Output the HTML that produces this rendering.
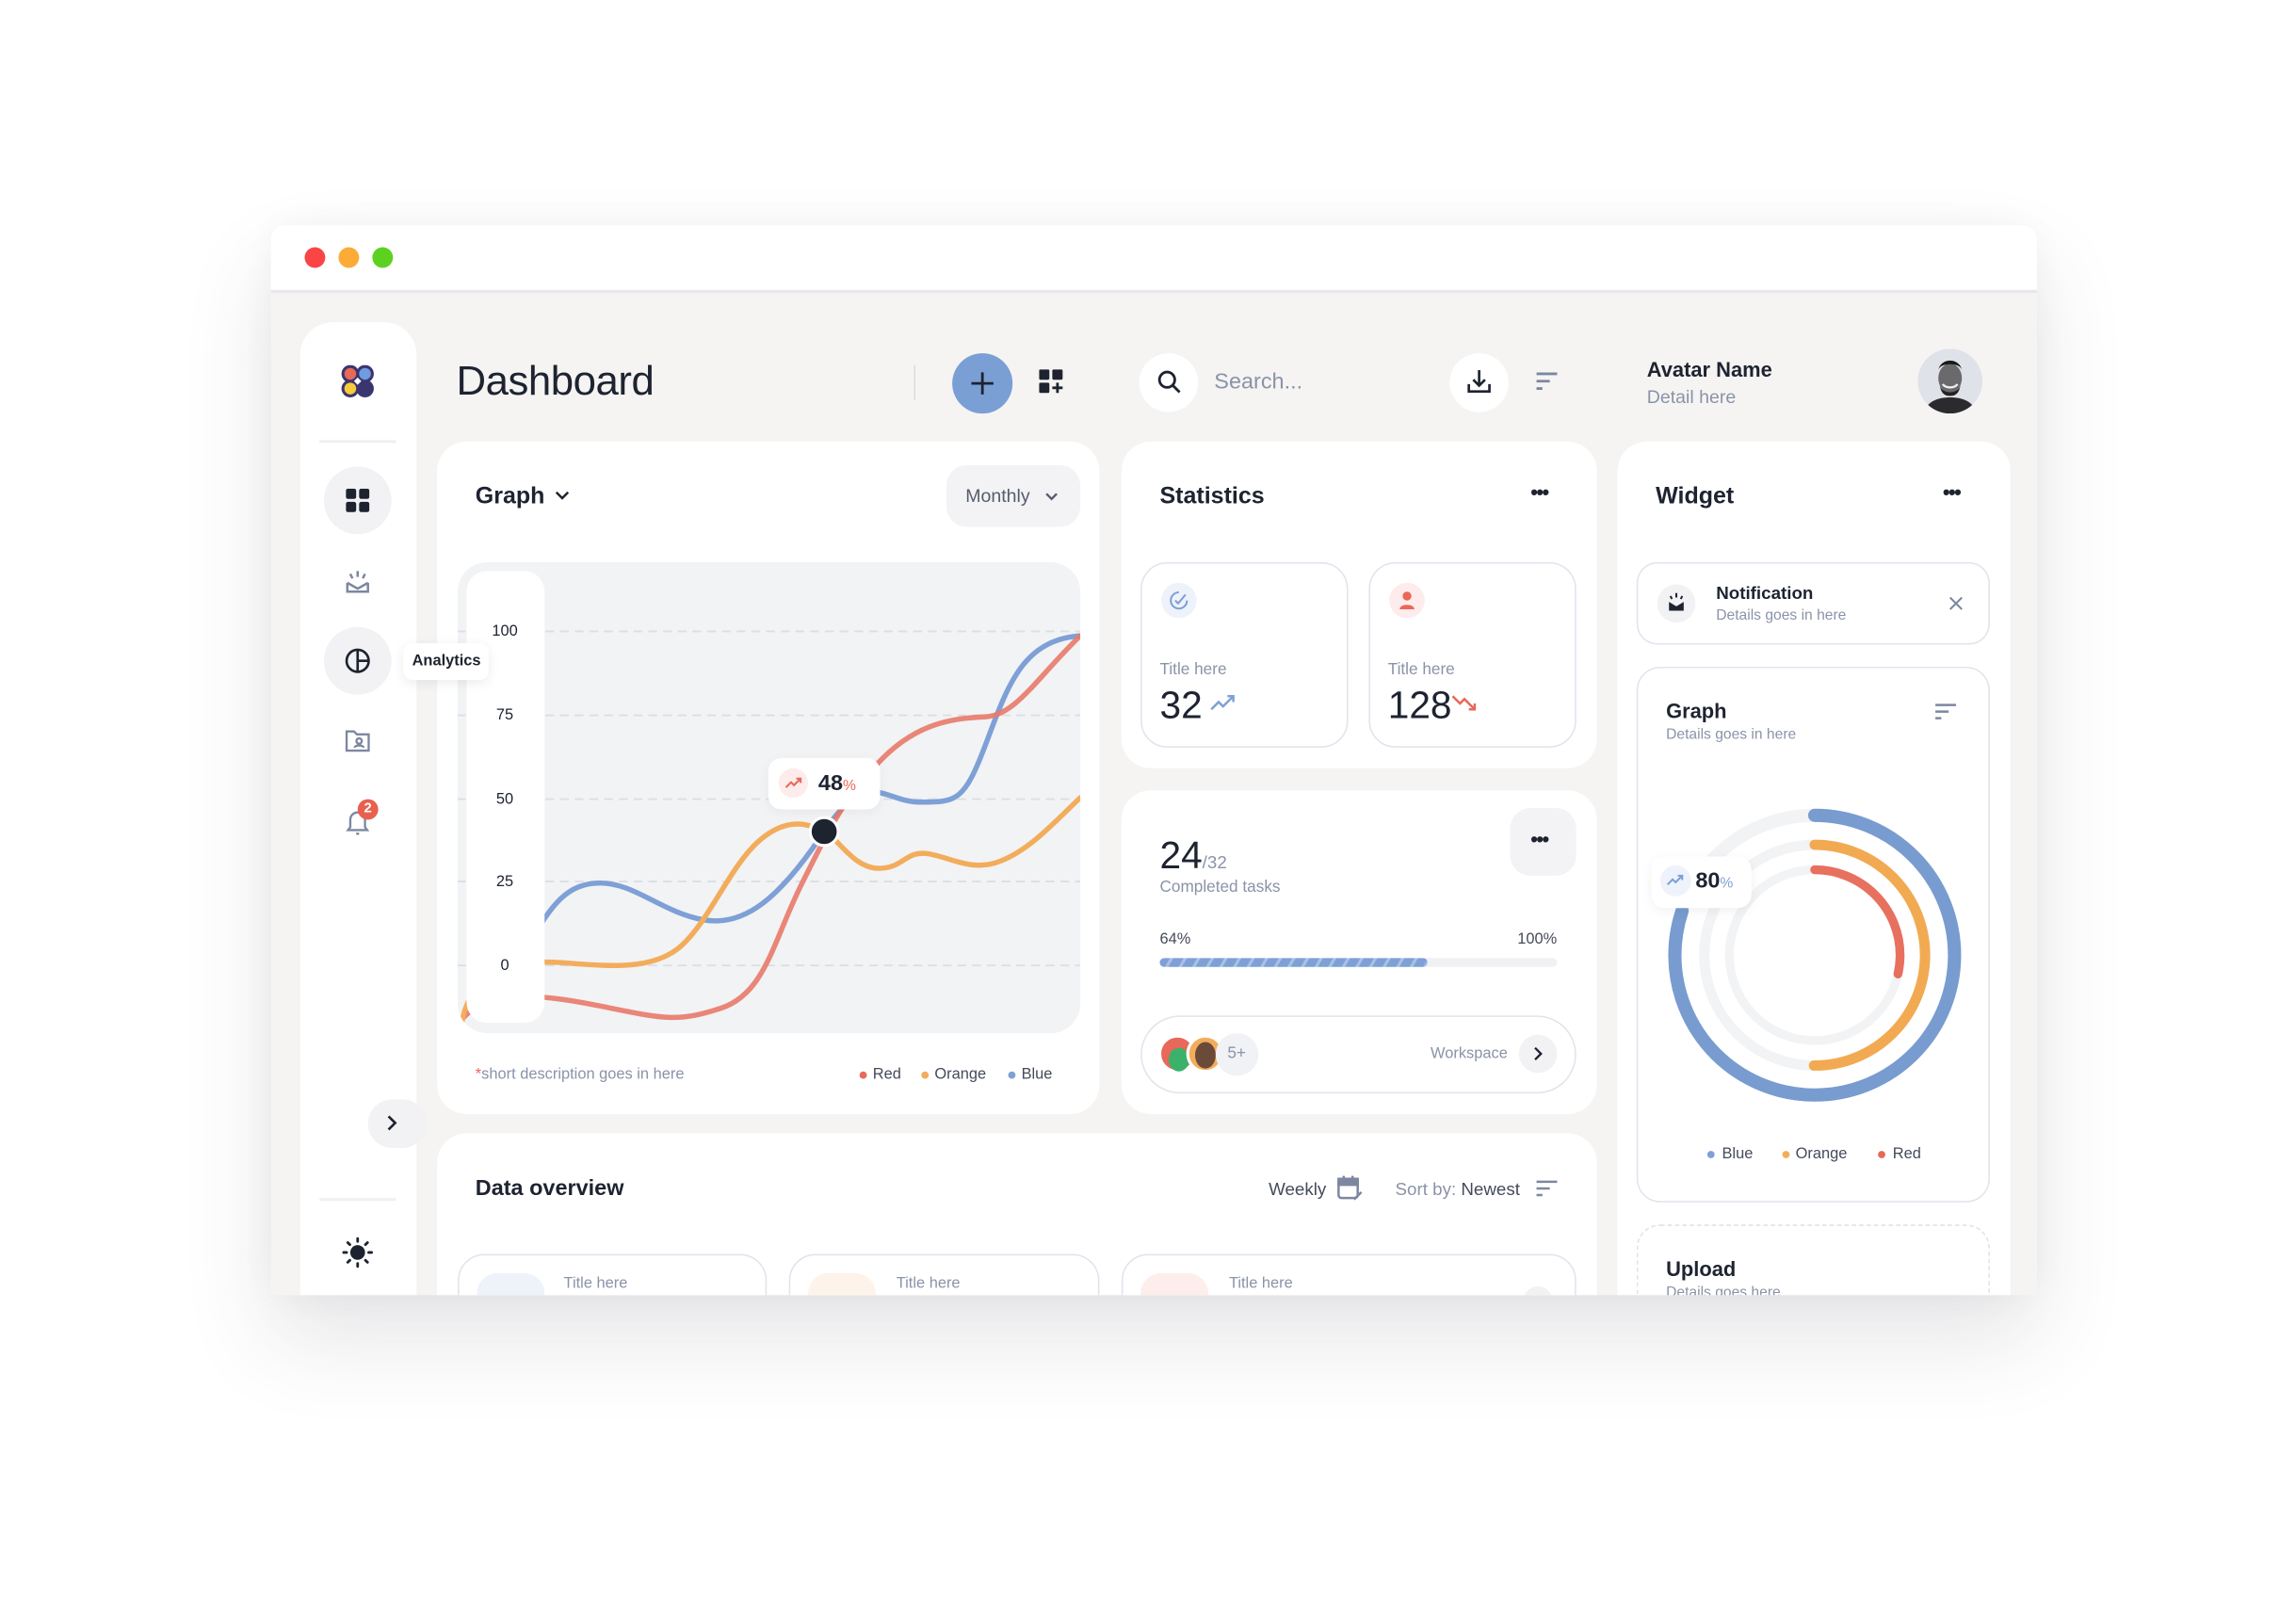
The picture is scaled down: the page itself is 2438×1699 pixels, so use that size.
<!DOCTYPE html>
<html><head><meta charset="utf-8"><style>
*{box-sizing:border-box;margin:0;padding:0}
html,body{width:2438px;height:1699px;overflow:hidden;background:#fff;font-family:"Liberation Sans",sans-serif}
#root{position:absolute;left:0;top:0;width:1560px;height:1087px;transform:scale(1.5628);transform-origin:0 0}
.a{position:absolute}
.win{position:absolute;left:184px;top:153px;width:1200px;height:727px;background:#f5f4f3;border-radius:10px 10px 0 0;overflow:hidden;box-shadow:0 30px 60px rgba(60,60,80,.13),0 0 30px rgba(60,60,80,.05)}
.card{position:absolute;background:#fff;border-radius:20px}
.t{position:absolute;white-space:nowrap;color:#1e2330}
.g{color:#8a93a8}
.b{font-weight:bold}
.sub{position:absolute;border:1px solid #e1e4ec;border-radius:18px;background:#fff}
.circ{position:absolute;border-radius:50%}
</style></head><body><div id="root">
<div class="win">
 <div class="a" style="left:0;top:0;width:1200px;height:46px;background:#fff;border-bottom:2px solid #e8e8ec"></div>
 <div class="circ" style="left:23px;top:15px;width:14px;height:14px;background:#f94545"></div>
 <div class="circ" style="left:46px;top:15px;width:14px;height:14px;background:#fbab36"></div>
 <div class="circ" style="left:69px;top:15px;width:14px;height:14px;background:#5dd120"></div>
</div>
<div style="position:absolute;left:184px;top:153px;width:1200px;height:727px;overflow:hidden">
<div style="position:absolute;left:-184px;top:-153px;width:1560px;height:1087px">
 <!-- sidebar -->
 <div class="card" style="left:204px;top:219px;width:79px;height:700px;border-radius:22px"></div>
 <svg class="a" style="left:232px;top:248px" width="22" height="22" viewBox="0 0 22 22"><circle cx="6" cy="6" r="6" fill="#3b356f"/><circle cx="16" cy="6" r="6" fill="#3b356f"/><circle cx="6" cy="16" r="6" fill="#3b356f"/><circle cx="16" cy="16" r="6" fill="#3b356f"/><circle cx="6" cy="6" r="4" fill="#e8685a"/><circle cx="16" cy="6" r="4" fill="#6f9be0"/><circle cx="6" cy="16" r="4" fill="#f5cc3c"/><path d="M11 8.5L13.5 11 11 13.5 8.5 11z" fill="#fff"/></svg>
 <div class="a" style="left:217px;top:299px;width:52px;height:2px;background:#f0f0f2"></div>
 <div class="circ" style="left:220px;top:317px;width:46px;height:46px;background:#f2f2f4"></div>
 <svg class="a" style="left:235px;top:332px" width="16" height="16"><rect x="0" y="0" width="7" height="7" rx="1.5" fill="#1e2330"/><rect x="9" y="0" width="7" height="7" rx="1.5" fill="#1e2330"/><rect x="0" y="9" width="7" height="7" rx="1.5" fill="#1e2330"/><rect x="9" y="9" width="7" height="7" rx="1.5" fill="#1e2330"/></svg>
 <svg class="a" style="left:234px;top:386px" width="18" height="18" fill="none" stroke="#7c87a0" stroke-width="1.6"><path d="M2 10v6h14v-6M2 10l7 4 7-4"/><path d="M9 2v4M4 4l1.5 3M14 4l-1.5 3"/></svg>
 <div class="circ" style="left:220px;top:426px;width:46px;height:46px;background:#f2f2f4"></div>
 <svg class="a" style="left:234px;top:440px" width="18" height="18" fill="none" stroke="#1e2330" stroke-width="1.7"><circle cx="9" cy="9" r="7.5"/><path d="M9 1.5v15M9 9h7.5"/></svg>
 <svg class="a" style="left:234px;top:494px" width="18" height="18" fill="none" stroke="#7c87a0" stroke-width="1.5"><path d="M1.5 3h5l2 2h8v11h-15z"/><circle cx="10" cy="9.5" r="1.8"/><path d="M7 14c0-2 6-2 6 0"/></svg>
 <svg class="a" style="left:234px;top:548px" width="18" height="20" fill="none" stroke="#7c87a0" stroke-width="1.5"><path d="M4 14V9a5 5 0 0110 0v5l1.5 2h-13z"/><path d="M8 18.5h2"/></svg>
 <div class="circ" style="left:243px;top:543px;width:14px;height:14px;background:#e9604e;color:#fff;font-size:9.5px;font-weight:bold;text-align:center;line-height:14px">2</div>
 <div class="a" style="left:250px;top:747px;width:40px;height:33px;background:#f2f2f4;border-radius:17px"></div>
 <svg class="a" style="left:261px;top:757px" width="10" height="12" fill="none" stroke="#1e2330" stroke-width="1.7"><path d="M3 1.5l4.5 4.5L3 10.5"/></svg>
 <div class="a" style="left:217px;top:814px;width:52px;height:2px;background:#f0f0f2"></div>
 <svg class="a" style="left:232px;top:840px" width="22" height="22" stroke="#1e2330" stroke-width="1.8" stroke-linecap="round"><circle cx="11" cy="11" r="5" fill="#1e2330" stroke="none"/><path d="M11 1.5v2M11 18.5v2M1.5 11h2M18.5 11h2M4.3 4.3l1.4 1.4M16.3 16.3l1.4 1.4M4.3 17.7l1.4-1.4M16.3 5.7l1.4-1.4"/></svg>

 <!-- header -->
 <div class="t" style="left:310px;top:243px;font-size:28px;letter-spacing:-.3px">Dashboard</div>
 <div class="a" style="left:621px;top:248px;width:1px;height:24px;background:#dcdce0"></div>
 <div class="circ" style="left:647px;top:240px;width:41px;height:41px;background:#7a9fd4"></div>
 <svg class="a" style="left:659px;top:252px" width="17" height="17" stroke="#1e2330" stroke-width="1.8"><path d="M8.5 1v15M1 8.5h15"/></svg>
 <svg class="a" style="left:706px;top:251px" width="17" height="17" fill="#1e2330"><rect x="0" y="0" width="7" height="7" rx="1"/><rect x="9" y="0" width="7" height="7" rx="1"/><rect x="0" y="9" width="7" height="7" rx="1"/><path d="M12.5 9v7M9 12.5h7" stroke="#1e2330" stroke-width="1.8"/></svg>
 <div class="circ" style="left:774px;top:240px;width:40px;height:40px;background:#fff"></div>
 <svg class="a" style="left:786px;top:251px" width="17" height="17" fill="none" stroke="#1e2330" stroke-width="1.8"><circle cx="7" cy="7" r="5.2"/><path d="M11 11l4.5 4.5"/></svg>
 <div class="t g" style="left:825px;top:251px;font-size:15px">Search...</div>
 <div class="circ" style="left:985px;top:240px;width:40px;height:40px;background:#fff"></div>
 <svg class="a" style="left:996px;top:250px" width="18" height="18" fill="none" stroke="#1e2330" stroke-width="1.7"><path d="M9 1.5v10M5 8l4 4 4-4M2 11v5h14v-5"/></svg>
 <svg class="a" style="left:1043px;top:252px" width="16" height="14" stroke="#7c87a0" stroke-width="1.8"><path d="M1 2h14M1 7h9M1 12h4"/></svg>
 <div class="t b" style="left:1119px;top:243px;font-size:14px">Avatar Name</div>
 <div class="t g" style="left:1119px;top:263px;font-size:12.5px">Detail here</div>
 <svg class="a" style="left:1303px;top:237px" width="44" height="44"><defs><clipPath id="av"><circle cx="22" cy="22" r="22"/></clipPath></defs><circle cx="22" cy="22" r="22" fill="#dfe2e8"/><g clip-path="url(#av)"><path d="M4 44c2-8 9-11 18-11s16 3 18 11z" fill="#2b2b2e"/><ellipse cx="22" cy="20" rx="8" ry="10" fill="#6a6a6c"/><path d="M14 15c0-6 16-6 16 0 0-3-3-7-8-7s-8 4-8 7z" fill="#1a1a1a"/><path d="M17 24c2 3 8 3 10 0" stroke="#eee" stroke-width="1.5" fill="none"/><path d="M15 25c2 6 12 6 14 0-1 5-3 7-7 7s-6-2-7-7z" fill="#222"/></g></svg>

 <!-- graph card -->
 <div class="card" style="left:297px;top:300px;width:450px;height:457px"></div>
 <div class="t b" style="left:323px;top:329px;font-size:16px">Graph</div>
 <svg class="a" style="left:377px;top:333px" width="10" height="8" fill="none" stroke="#1e2330" stroke-width="1.6"><path d="M1 1.5l4 4 4-4"/></svg>
 <div class="a" style="left:643px;top:316px;width:91px;height:42px;background:#f3f3f5;border-radius:14px"></div>
 <div class="t" style="left:656px;top:330px;font-size:12.5px;color:#555c6c">Monthly</div>
 <svg class="a" style="left:710px;top:334px" width="9" height="7" fill="none" stroke="#555c6c" stroke-width="1.5"><path d="M1 1.5l3.5 3.5 3.5-3.5"/></svg>
 <div class="a" style="left:311px;top:382px;width:423px;height:320px;background:#f2f3f5;border-radius:20px;overflow:hidden">
  <svg width="423" height="320" viewBox="311 382 423 320" style="position:absolute;left:0;top:0" fill="none" stroke-linecap="round">
   <g stroke="#dcdee4" stroke-width="1.2" stroke-dasharray="5 5"><path d="M311 429H734M311 486H734M311 543H734M311 599H734M311 656H734"/></g>
   <path d="M360 640C375 615 385 600 408 600S450 620 478 625S530 610 560 565S600 545 625 545S655 545 670 505S695 435 734 432" stroke="#7ea0d6" stroke-width="3.5"/>
   <path d="M312 695C330 670 370 676 410 684S460 695 490 685S525 640 545 600S575 540 600 515S650 488 670 487S705 460 734 432" stroke="#e87a6a" stroke-width="3.5" opacity=".9"/>
   <path d="M314 694C320 660 350 652 380 654S440 660 460 645S495 590 515 572S550 560 560 565S580 590 597 590S615 578 630 580S660 593 680 585S715 560 734 542" stroke="#f2ad5c" stroke-width="3.5"/>
   <circle cx="560" cy="565" r="9.5" fill="#1e2330" stroke="#fff" stroke-width="2"/>
  </svg>
  <div class="a" style="left:6px;top:6px;width:53px;height:307px;background:#fff;border-radius:14px"></div>
 </div>
 <div class="t" style="left:334px;top:423px;font-size:10.5px;width:18px;text-align:center">100</div>
 <div class="t" style="left:334px;top:480px;font-size:10.5px;width:18px;text-align:center">75</div>
 <div class="t" style="left:334px;top:537px;font-size:10.5px;width:18px;text-align:center">50</div>
 <div class="t" style="left:334px;top:593px;font-size:10.5px;width:18px;text-align:center">25</div>
 <div class="t" style="left:334px;top:650px;font-size:10.5px;width:18px;text-align:center">0</div>
 <div class="a" style="left:522px;top:515px;width:76px;height:35px;background:#fff;border-radius:9px;box-shadow:0 2px 8px rgba(0,0,0,.05)"></div>
 <div class="circ" style="left:529px;top:522px;width:20px;height:20px;background:#fdeceb"></div>
 <svg class="a" style="left:533px;top:527px" width="12" height="10" fill="none" stroke="#e8685a" stroke-width="1.3"><path d="M1 8l3.5-3.5 2 2L11 2M8 2h3v3"/></svg>
 <div class="t b" style="left:556px;top:524px;font-size:15px">48<span style="color:#e8685a;font-size:10px;font-weight:normal">%</span></div>
 <div class="t g" style="left:323px;top:724px;font-size:10.5px"><span style="color:#e8685a">*</span>short description goes in here</div>
 <div class="circ" style="left:584px;top:728px;width:5px;height:5px;background:#e8685a"></div><div class="t" style="left:593px;top:724px;font-size:10.5px;color:#444b5a">Red</div>
 <div class="circ" style="left:626px;top:728px;width:5px;height:5px;background:#f2ad5c"></div><div class="t" style="left:635px;top:724px;font-size:10.5px;color:#444b5a">Orange</div>
 <div class="circ" style="left:685px;top:728px;width:5px;height:5px;background:#7ea0d6"></div><div class="t" style="left:694px;top:724px;font-size:10.5px;color:#444b5a">Blue</div>

 <!-- tooltip over everything -->
 <div class="a" style="left:274px;top:437px;width:58px;height:25px;background:#fff;border-radius:6px;box-shadow:0 2px 8px rgba(0,0,0,.08)"></div>
 <div class="t b" style="left:280px;top:443px;font-size:10.5px">Analytics</div>

 <!-- statistics -->
 <div class="card" style="left:762px;top:300px;width:323px;height:222px"></div>
 <div class="t b" style="left:788px;top:329px;font-size:16px">Statistics</div>
 <div class="t b" style="left:1040px;top:326px;font-size:14px;letter-spacing:-1px">•••</div>
 <div class="sub" style="left:775px;top:382px;width:141px;height:126px"></div>
 <div class="circ" style="left:789px;top:396px;width:24px;height:24px;background:#eef2fb"></div>
 <svg class="a" style="left:794px;top:401px" width="14" height="14" fill="none" stroke="#7ea0d6" stroke-width="1.3"><path d="M12.5 7A5.5 5.5 0 117 1.5"/><path d="M4.5 7l2 2 5-6"/></svg>
 <div class="t g" style="left:788px;top:449px;font-size:11px">Title here</div>
 <div class="t" style="left:788px;top:464px;font-size:26px">32</div>
 <svg class="a" style="left:822px;top:471px" width="18" height="13" fill="none" stroke="#7ea0d6" stroke-width="1.6"><path d="M1 11l5-5 3 3 7-7M12 2h4v4"/></svg>
 <div class="sub" style="left:930px;top:382px;width:141px;height:126px"></div>
 <div class="circ" style="left:944px;top:396px;width:24px;height:24px;background:#fdeceb"></div>
 <svg class="a" style="left:950px;top:401px" width="12" height="14" fill="#e8685a"><circle cx="6" cy="4" r="3"/><path d="M1 13c0-4 10-4 10 0z"/></svg>
 <div class="t g" style="left:943px;top:449px;font-size:11px">Title here</div>
 <div class="t" style="left:943px;top:464px;font-size:26px">128</div>
 <svg class="a" style="left:986px;top:471px" width="18" height="13" fill="none" stroke="#e8685a" stroke-width="1.6"><path d="M1 2l5 5 3-3 7 7M12 11h4V7"/></svg>

 <!-- tasks -->
 <div class="card" style="left:762px;top:537px;width:323px;height:220px"></div>
 <div class="t" style="left:788px;top:566px;font-size:26px">24<span class="g" style="font-size:12px">/32</span></div>
 <div class="t g" style="left:788px;top:597px;font-size:11px">Completed tasks</div>
 <div class="a" style="left:1026px;top:549px;width:45px;height:46px;background:#f3f3f5;border-radius:14px"></div>
 <div class="t b" style="left:1040px;top:562px;font-size:14px;letter-spacing:-1px">•••</div>
 <div class="t" style="left:788px;top:632px;font-size:10.5px;color:#444b5a">64%</div>
 <div class="t" style="left:1031px;top:632px;font-size:10.5px;color:#444b5a">100%</div>
 <div class="a" style="left:788px;top:651px;width:270px;height:6px;background:#f1f1f4;border-radius:3px"></div>
 <div class="a" style="left:788px;top:651px;width:182px;height:6px;border-radius:3px;background:repeating-linear-gradient(120deg,#7ea0d6 0 6px,#a9c0e6 6px 8px)"></div>
 <div class="a" style="left:775px;top:690px;width:296px;height:53px;border:1px solid #e1e4ec;border-radius:27px;background:#fff"></div>
 <div class="circ" style="left:787px;top:703px;width:26px;height:26px;background:#e8685a;border:2px solid #fff"></div>
 <div class="circ" style="left:794px;top:712px;width:14px;height:16px;background:#3ab26a"></div>
 <div class="circ" style="left:806px;top:703px;width:26px;height:26px;background:#f2ad5c;border:2px solid #fff"></div>
 <div class="circ" style="left:812px;top:708px;width:14px;height:18px;background:#6b4a3a"></div>
 <div class="circ" style="left:826px;top:702px;width:29px;height:29px;background:#f1f2f5"></div>
 <div class="t g" style="left:834px;top:710px;font-size:11px">5+</div>
 <div class="t g" style="left:972px;top:710px;font-size:10.5px">Workspace</div>
 <div class="circ" style="left:1032px;top:703px;width:26px;height:26px;background:#f2f2f4"></div>
 <svg class="a" style="left:1041px;top:711px" width="8" height="10" fill="none" stroke="#1e2330" stroke-width="1.5"><path d="M2 1l4 4-4 4"/></svg>

 <!-- widget -->
 <div class="card" style="left:1099px;top:300px;width:267px;height:640px"></div>
 <div class="t b" style="left:1125px;top:329px;font-size:16px">Widget</div>
 <div class="t b" style="left:1320px;top:326px;font-size:14px;letter-spacing:-1px">•••</div>
 <div class="sub" style="left:1112px;top:382px;width:240px;height:56px;border-radius:14px"></div>
 <div class="circ" style="left:1126px;top:397px;width:26px;height:26px;background:#f2f2f4"></div>
 <svg class="a" style="left:1132px;top:402px" width="14" height="14" fill="#1e2330"><path d="M2 7l5 3 5-3v6H2z"/><path d="M7 1v3M3 3l1 2M11 3l-1 2" stroke="#1e2330" stroke-width="1.3"/></svg>
 <div class="t b" style="left:1166px;top:396px;font-size:12px">Notification</div>
 <div class="t g" style="left:1166px;top:413px;font-size:10px">Details goes in here</div>
 <svg class="a" style="left:1324px;top:405px" width="10" height="10" stroke="#7c87a0" stroke-width="1.3"><path d="M1 1l8 8M9 1l-8 8"/></svg>
 <div class="sub" style="left:1112px;top:453px;width:240px;height:364px;border-radius:16px"></div>
 <div class="t b" style="left:1132px;top:475px;font-size:14px">Graph</div>
 <div class="t g" style="left:1132px;top:494px;font-size:10px">Details goes in here</div>
 <svg class="a" style="left:1314px;top:477px" width="16" height="13" stroke="#7c87a0" stroke-width="1.6"><path d="M1 2h14M1 6.5h9M1 11h4"/></svg>
 <svg class="a" style="left:1120px;top:536px" width="226" height="226" viewBox="-113 -113 226 226" fill="none" stroke-linecap="round">
  <circle r="95" stroke="#f2f3f5" stroke-width="9"/>
  <circle r="75" stroke="#f2f3f5" stroke-width="7"/>
  <circle r="58" stroke="#f2f3f5" stroke-width="6"/>
  <circle r="95" stroke="#789ccf" stroke-width="9" stroke-dasharray="478 1000" transform="rotate(-90)"/>
  <circle r="75" stroke="#f2aa52" stroke-width="7" stroke-dasharray="236 1000" transform="rotate(-90)"/>
  <circle r="58" stroke="#e8705f" stroke-width="6" stroke-dasharray="104 1000" transform="rotate(-90)"/>
 </svg>
 <div class="a" style="left:1122px;top:582px;width:68px;height:35px;background:#fff;border-radius:9px;box-shadow:0 2px 8px rgba(0,0,0,.06)"></div>
 <div class="circ" style="left:1128px;top:588px;width:21px;height:21px;background:#eef2fb"></div>
 <svg class="a" style="left:1132px;top:593px" width="13" height="10" fill="none" stroke="#7ea0d6" stroke-width="1.3"><path d="M1 8l3.5-3.5 2 2L11 2M8 2h3v3"/></svg>
 <div class="t b" style="left:1152px;top:590px;font-size:15px">80<span style="color:#7ea0d6;font-size:10px;font-weight:normal">%</span></div>
 <div class="circ" style="left:1160px;top:782px;width:5px;height:5px;background:#7ea0d6"></div><div class="t" style="left:1170px;top:778px;font-size:10.5px;color:#444b5a">Blue</div>
 <div class="circ" style="left:1211px;top:782px;width:5px;height:5px;background:#f2ad5c"></div><div class="t" style="left:1220px;top:778px;font-size:10.5px;color:#444b5a">Orange</div>
 <div class="circ" style="left:1276px;top:782px;width:5px;height:5px;background:#e8685a"></div><div class="t" style="left:1286px;top:778px;font-size:10.5px;color:#444b5a">Red</div>
 <div class="a" style="left:1112px;top:832px;width:240px;height:120px;border:1px dashed #dfe2ea;border-radius:16px"></div>
 <div class="t b" style="left:1132px;top:854px;font-size:14px">Upload</div>
 <div class="t g" style="left:1132px;top:873px;font-size:10px">Details goes here</div>

 <!-- data overview -->
 <div class="card" style="left:297px;top:770px;width:788px;height:200px"></div>
 <div class="t b" style="left:323px;top:799px;font-size:15px">Data overview</div>
 <div class="t" style="left:862px;top:801px;font-size:12px;color:#444b5a">Weekly</div>
 <svg class="a" style="left:908px;top:798px" width="18" height="18" fill="none" stroke="#7c87a0" stroke-width="1.6"><rect x="1.5" y="3" width="13" height="13" rx="2"/><path d="M1.5 7h13M5 1v4M11 1v4M12 17l5-5"/><rect x="1.5" y="3" width="13" height="4" fill="#7c87a0"/></svg>
 <div class="t" style="left:948px;top:801px;font-size:12px;color:#8a93a8">Sort by: <span style="color:#444b5a">Newest</span></div>
 <svg class="a" style="left:1043px;top:801px" width="16" height="13" stroke="#7c87a0" stroke-width="1.6"><path d="M1 2h14M1 6.5h9M1 11h4"/></svg>
 <div class="sub" style="left:311px;top:852px;width:210px;height:80px;border-radius:18px"></div>
 <div class="a" style="left:324px;top:865px;width:46px;height:40px;border-radius:14px;background:#eef2fb"></div>
 <div class="t g" style="left:383px;top:866px;font-size:10.5px">Title here</div>
 <div class="sub" style="left:536px;top:852px;width:211px;height:80px;border-radius:18px"></div>
 <div class="a" style="left:549px;top:865px;width:46px;height:40px;border-radius:14px;background:#fdf3ea"></div>
 <div class="t g" style="left:609px;top:866px;font-size:10.5px">Title here</div>
 <div class="sub" style="left:762px;top:852px;width:309px;height:80px;border-radius:18px"></div>
 <div class="a" style="left:775px;top:865px;width:46px;height:40px;border-radius:14px;background:#fdeeec"></div>
 <div class="t g" style="left:835px;top:866px;font-size:10.5px">Title here</div>
 <div class="circ" style="left:1035px;top:874px;width:20px;height:20px;background:#f2f2f4"></div>
</div></div>
</div></body></html>
